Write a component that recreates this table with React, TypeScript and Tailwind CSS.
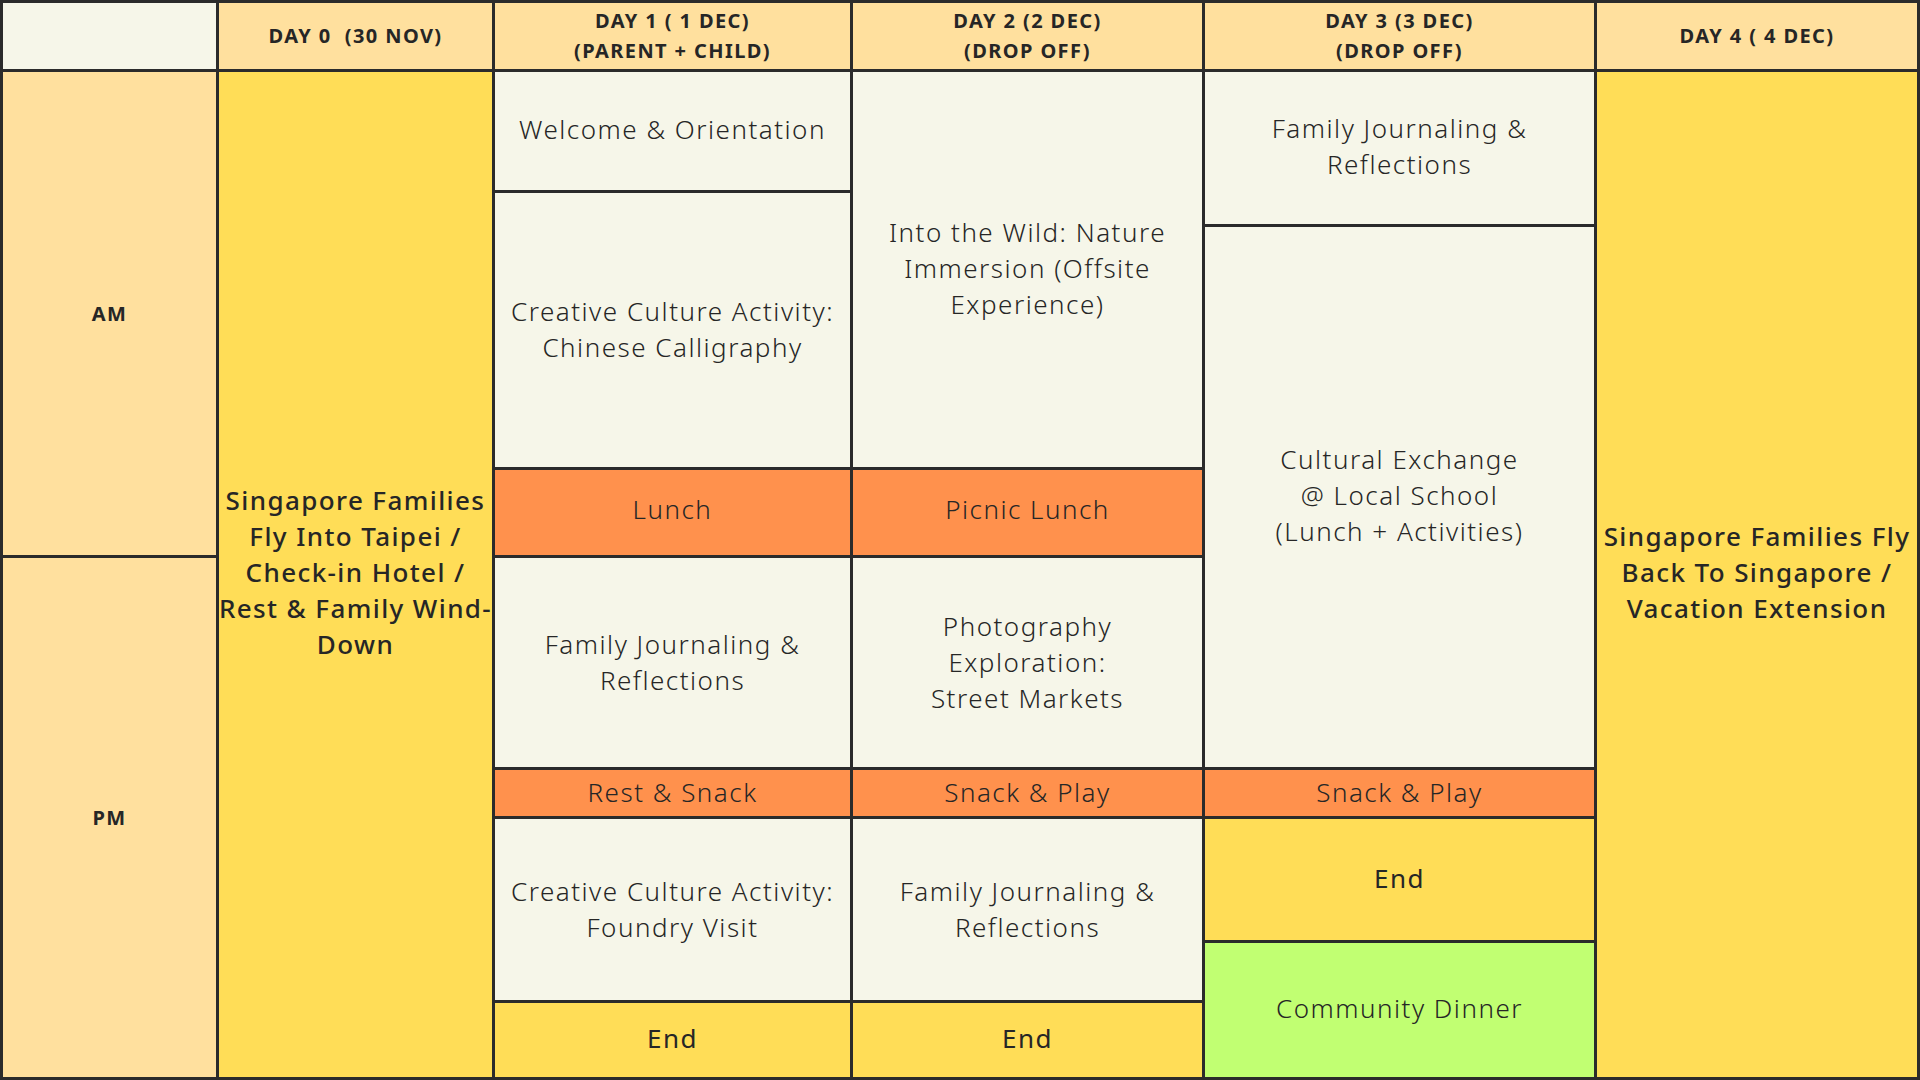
import React from "react";

function Cell({
  className,
  children,
}: {
  className: string;
  children?: React.ReactNode;
}) {
  return (
    <div
      className={`flex items-center justify-center text-center text-[#262626] ${className}`}
    >
      {children}
    </div>
  );
}

const H = "bg-[#FFE09E] font-['Noto_Sans',sans-serif] font-bold text-[20px] leading-[30px] tracking-[1.4px]";
const cream = "bg-[#F6F6E9]";
const orange = "bg-[#FF914D]";
const yellow = "bg-[#FFDD57]";
const green = "bg-[#C1FF72]";
const txt = "font-['Noto_Sans',sans-serif] font-light text-[26px] leading-[36px] tracking-[1.5px] px-1 text-[#222222]";
const side = "font-['Noto_Sans',sans-serif] font-medium text-[26px] leading-[36px] tracking-[1.4px] px-0 whitespace-nowrap";

export default function App() {
  return (
    <div className="w-[1920px] h-[1080px] bg-[#2b2b2b] p-[3px] overflow-hidden">
      <div className="grid h-full gap-[3px] grid-cols-[213px_273px_355px_349px_389px_320px] grid-rows-[66px_118px_31px_240px_85px_209px_46px_121px_57px_74px]">
        {/* header */}
        <Cell className="bg-[#F6F6E9] col-start-1 row-start-1" />
        <Cell className={`${H} col-start-2 row-start-1`}>DAY 0&nbsp;&nbsp;(30 NOV)</Cell>
        <Cell className={`${H} col-start-3 row-start-1`}>
          DAY 1 ( 1 DEC)
          <br />
          (PARENT + CHILD)
        </Cell>
        <Cell className={`${H} col-start-4 row-start-1`}>
          DAY 2 (2 DEC)
          <br />
          (DROP OFF)
        </Cell>
        <Cell className={`${H} col-start-5 row-start-1`}>
          DAY 3 (3 DEC)
          <br />
          (DROP OFF)
        </Cell>
        <Cell className={`${H} col-start-6 row-start-1`}>DAY 4 ( 4 DEC)</Cell>

        {/* AM / PM */}
        <Cell className={`${H} col-start-1 row-start-2 row-span-4`}>AM</Cell>
        <Cell className={`${H} col-start-1 row-start-6 row-span-5`}>PM</Cell>

        {/* Day 0 */}
        <Cell className={`${yellow} ${side} col-start-2 row-start-2 row-span-9 pb-[6px]`}>
          Singapore Families
          <br />
          Fly Into Taipei /
          <br />
          Check-in Hotel /
          <br />
          Rest &amp; Family Wind-
          <br />
          Down
        </Cell>

        {/* Day 1 */}
        <Cell className={`${cream} ${txt} col-start-3 row-start-2 pb-[4px]`}>Welcome &amp; Orientation</Cell>
        <Cell className={`${cream} ${txt} col-start-3 row-start-3 row-span-2 pb-[2px]`}>
          Creative Culture Activity:
          <br />
          Chinese Calligraphy
        </Cell>
        <Cell className={`${orange} ${txt} col-start-3 row-start-5 pb-[7px]`}>Lunch</Cell>
        <Cell className={`${cream} ${txt} col-start-3 row-start-6 pb-[2px]`}>
          Family Journaling &amp;
          <br />
          Reflections
        </Cell>
        <Cell className={`${orange} ${txt} col-start-3 row-start-7 pb-[3px]`}>Rest &amp; Snack</Cell>
        <Cell className={`${cream} ${txt} col-start-3 row-start-8 row-span-2 pb-[2px]`}>
          Creative Culture Activity:
          <br />
          Foundry Visit
        </Cell>
        <Cell className={`${yellow} ${txt} !font-normal col-start-3 row-start-10 pb-[5px]`}>End</Cell>

        {/* Day 2 */}
        <Cell className={`${cream} ${txt} col-start-4 row-start-2 row-span-3 pb-[4px]`}>
          Into the Wild: Nature
          <br />
          Immersion (Offsite
          <br />
          Experience)
        </Cell>
        <Cell className={`${orange} ${txt} col-start-4 row-start-5 pb-[7px]`}>Picnic Lunch</Cell>
        <Cell className={`${cream} ${txt} col-start-4 row-start-6 pb-[2px]`}>
          Photography
          <br />
          Exploration:
          <br />
          Street Markets
        </Cell>
        <Cell className={`${orange} ${txt} col-start-4 row-start-7 pb-[3px]`}>Snack &amp; Play</Cell>
        <Cell className={`${cream} ${txt} col-start-4 row-start-8 row-span-2 pb-[2px]`}>
          Family Journaling &amp;
          <br />
          Reflections
        </Cell>
        <Cell className={`${yellow} ${txt} !font-normal col-start-4 row-start-10 pb-[5px]`}>End</Cell>

        {/* Day 3 */}
        <Cell className={`${cream} ${txt} col-start-5 row-start-2 row-span-2 pb-[4px]`}>
          Family Journaling &amp;
          <br />
          Reflections
        </Cell>
        <Cell className={`${cream} ${txt} col-start-5 row-start-4 row-span-3 pb-[4px]`}>
          Cultural Exchange
          <br />
          @ Local School
          <br />
          (Lunch + Activities)
        </Cell>
        <Cell className={`${orange} ${txt} col-start-5 row-start-7 pb-[3px]`}>Snack &amp; Play</Cell>
        <Cell className={`${yellow} ${txt} !font-normal col-start-5 row-start-8 pb-[4px]`}>End</Cell>
        <Cell className={`${green} ${txt} col-start-5 row-start-9 row-span-2 pb-[4px]`}>Community Dinner</Cell>

        {/* Day 4 */}
        <Cell className={`${yellow} ${side} col-start-6 row-start-2 row-span-9 pb-[6px]`}>
          Singapore Families Fly
          <br />
          Back To Singapore /
          <br />
          Vacation Extension
        </Cell>
      </div>
    </div>
  );
}
